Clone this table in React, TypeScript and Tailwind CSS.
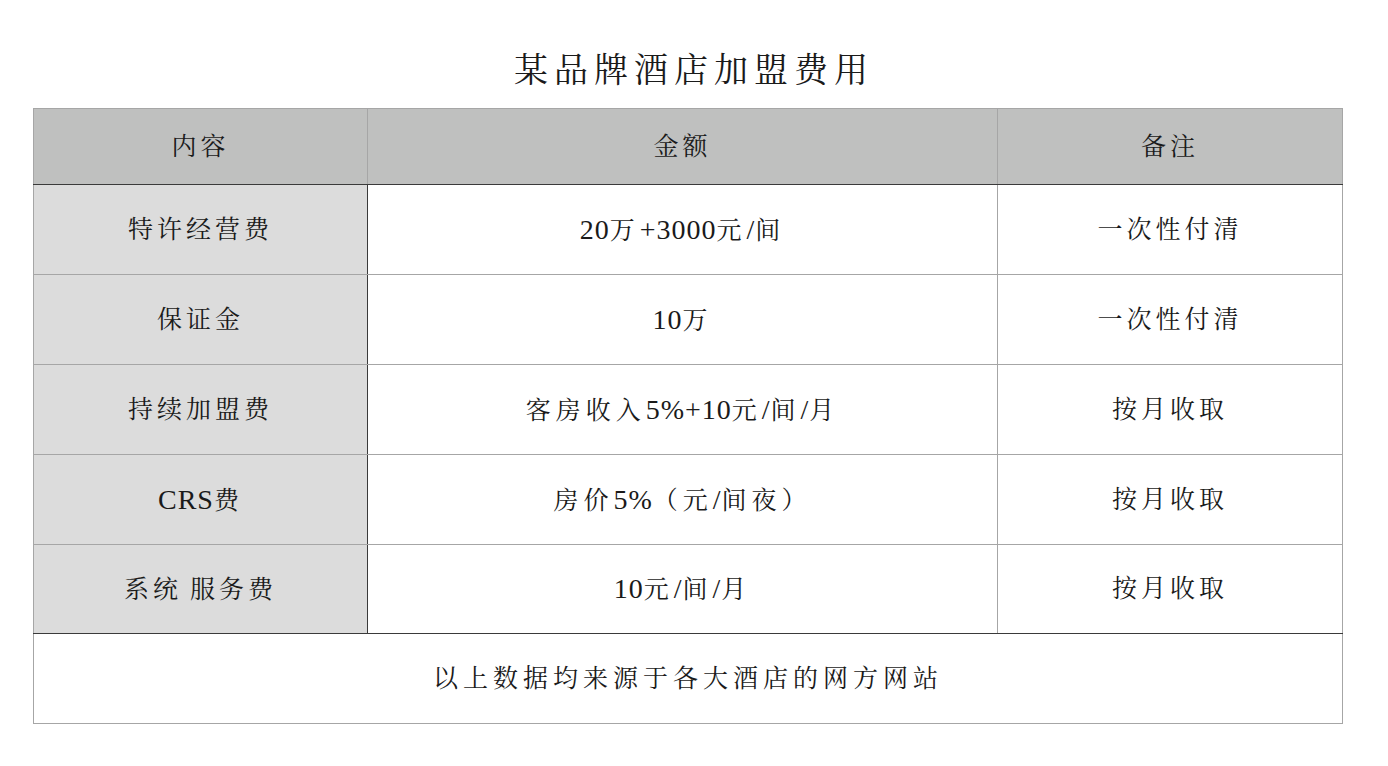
import React from "react";

const rows: [string, string, string][] = [
  ["特许经营费", "20万+3000元/间", "一次性付清"],
  ["保证金", "10万", "一次性付清"],
  ["持续加盟费", "客房收入5%+10元/间/月", "按月收取"],
  ["CRS费", "房价5%（元/间夜）", "按月收取"],
  ["系统 服务费", "10元/间/月", "按月收取"],
];

function Rich({ text }: { text: string }) {
  const parts = text.match(/[\x00-\x7F]+|[^\x00-\x7F]+/g) || [];
  return (
    <span className="flex items-baseline">
      {parts.map((p, i) =>
        /^[\x00-\x7F]+$/.test(p) ? (
          <span key={i} className="text-[28px] tracking-[1px] whitespace-pre">
            {p}
          </span>
        ) : (
          <span key={i}>{p}</span>
        )
      )}
    </span>
  );
}

export default function App() {
  return (
    <div className="w-[1388px] h-[766px] bg-white text-[#1a1a1a] font-[family-name:Liberation_Serif,Noto_Serif_CJK_SC,Noto_Sans_CJK_SC,serif]">
      <div className="h-[108px] flex justify-center pt-[51px]">
        <h1 className="text-[34px] leading-[40px] tracking-[6px] font-normal">某品牌酒店加盟费用</h1>
      </div>
      <div className="ml-[33px] w-[1310px] text-[25px] tracking-[4px]">
        <div className="flex h-[77px] bg-[#bfc0bf] border-t border-b border-t-[#a6a6a6] border-b-[#3a3a3a]">
          <div className="w-[335px] border-l border-r border-[#a6a6a6] flex items-center justify-center">内容</div>
          <div className="w-[630px] border-r border-[#a6a6a6] flex items-center justify-center">金额</div>
          <div className="flex-1 border-r border-[#a6a6a6] flex items-center justify-center">备注</div>
        </div>
        {rows.map((r, i) => (
          <div
            key={i}
            className={
              i === rows.length - 1
                ? "flex h-[89px] border-b border-[#3a3a3a]"
                : "flex h-[90px] border-b border-[#a6a6a6]"
            }
          >
            <div className="w-[335px] bg-[#dcdcdc] border-l border-l-[#a6a6a6] border-r border-r-[#3a3a3a] flex items-center justify-center">
              <Rich text={r[0]} />
            </div>
            <div className="w-[630px] border-r border-[#a6a6a6] flex items-center justify-center tracking-[5px]">
              <Rich text={r[1]} />
            </div>
            <div className="flex-1 border-r border-[#a6a6a6] flex items-center justify-center">{r[2]}</div>
          </div>
        ))}
        <div className="h-[90px] border-l border-r border-b border-[#a6a6a6] flex items-center justify-center tracking-[5px]">
          以上数据均来源于各大酒店的网方网站
        </div>
      </div>
    </div>
  );
}
